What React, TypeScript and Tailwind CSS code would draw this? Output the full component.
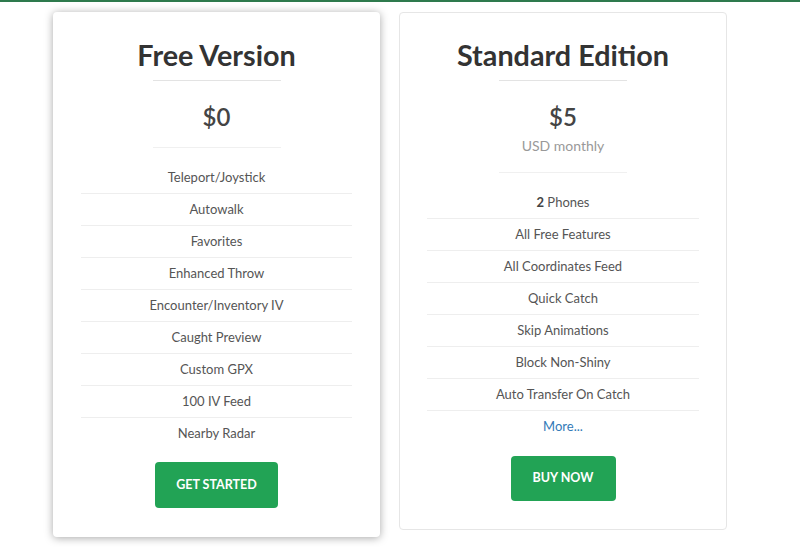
import React from "react";

const freeFeatures = [
  "Teleport/Joystick",
  "Autowalk",
  "Favorites",
  "Enhanced Throw",
  "Encounter/Inventory IV",
  "Caught Preview",
  "Custom GPX",
  "100 IV Feed",
  "Nearby Radar",
];

const stdFeatures: React.ReactNode[] = [
  <span>
    <span className="font-bold text-[#444]">2</span> Phones
  </span>,
  "All Free Features",
  "All Coordinates Feed",
  "Quick Catch",
  "Skip Animations",
  "Block Non-Shiny",
  "Auto Transfer On Catch",
];

function Row({ children, last }: { children: React.ReactNode; last?: boolean }) {
  return (
    <li
      className={
        "h-[32px] flex items-center justify-center text-[13px] text-[#555] " +
        (last ? "" : "border-b border-[#eeeeee]")
      }
    >
      {children}
    </li>
  );
}

export default function App() {
  return (
    <div
      className="w-[800px] h-[547px] bg-white overflow-hidden"
      style={{ fontFamily: "Lato, 'Open Sans', sans-serif" }}
    >
      <div className="h-[2px] bg-[#2e7a4d]" />
      <div className="flex gap-[19px] pl-[53px] pt-[10px] items-start">
        {/* Free */}
        <div className="w-[327px] h-[525px] bg-white rounded-[4px] shadow-[0_1px_8px_rgba(0,0,0,0.35)] px-[28px] pt-[23px] pb-[28px] flex flex-col items-center">
          <h2 className="text-[28.75px] leading-[40px] font-bold text-[#333]">Free Version</h2>
          <div className="w-[128px] h-px bg-[#e3e3e3] mt-[5px]" />
          <div className="mt-[19px] text-[24px] leading-[34px] font-semibold text-[#444]">$0</div>
          <div className="w-[128px] h-px bg-[#f0f0f0] mt-[13px]" />
          <ul className="w-full mt-[14px]">
            {freeFeatures.map((f, i) => (
              <Row key={f} last={i === freeFeatures.length - 1}>
                {f}
              </Row>
            ))}
          </ul>
          <button className="mt-[12px] h-[46px] w-[123px] rounded-[4px] bg-[#22a355] text-white text-[12.5px] font-bold">
            GET STARTED
          </button>
        </div>
        {/* Standard */}
        <div className="w-[328px] h-[518px] bg-white rounded-[4px] border border-[#e6e6e6] px-[27px] pt-[22px] pb-[28px] flex flex-col items-center">
          <h2 className="text-[28.75px] leading-[40px] font-bold text-[#333]">Standard Edition</h2>
          <div className="w-[128px] h-px bg-[#e3e3e3] mt-[5px]" />
          <div className="mt-[19px] text-[24px] leading-[34px] font-semibold text-[#444]">$5</div>
          <div className="mt-[2px] text-[14px] leading-[20px] text-[#999]">USD monthly</div>
          <div className="w-[128px] h-px bg-[#f0f0f0] mt-[16px]" />
          <ul className="w-full mt-[14px]">
            {stdFeatures.map((f, i) => (
              <Row key={i}>{f}</Row>
            ))}
            <li className="h-[32px] flex items-center justify-center text-[13px] text-[#337ab7]">
              More...
            </li>
          </ul>
          <button className="mt-[13px] h-[45px] w-[105px] rounded-[4px] bg-[#22a355] text-white text-[12.5px] font-bold">
            BUY NOW
          </button>
        </div>
      </div>
    </div>
  );
}
